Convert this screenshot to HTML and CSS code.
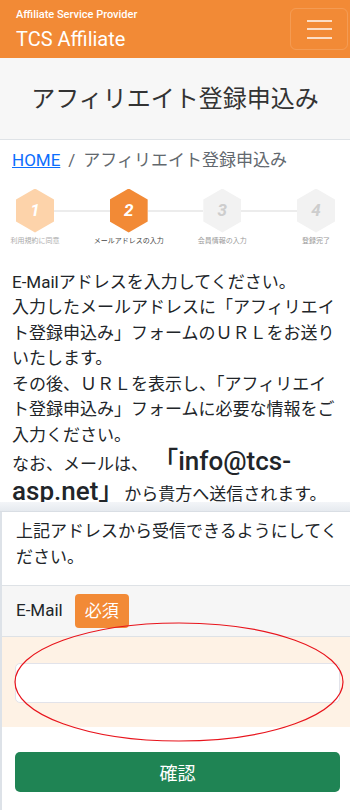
FILE: index.html
```html
<!DOCTYPE html>
<html lang="ja">
<head>
<meta charset="utf-8">
<title>アフィリエイト登録申込み</title>
<link rel="stylesheet" href="styles.css">
</head>
<body>
<div class="page">
  <header class="navbar">
    <div class="brand">
      <div class="brand-sub">Affiliate Service Provider</div>
      <div class="brand-name">TCS Affiliate</div>
    </div>
    <button class="toggler" type="button" aria-label="menu"><span class="bars"><i></i><i></i><i></i></span></button>
  </header>

  <section class="page-title"><h1>アフィリエイト登録申込み</h1></section>

  <main class="upper">
    <nav class="crumbs"><a href="#">HOME</a><span class="sep">/</span><span class="current">アフィリエイト登録申込み</span></nav>

    <ol class="steps">
      <li class="step done"><span class="hex">1</span><span class="label">利用規約に同意</span></li>
      <li class="link"></li>
      <li class="step active"><span class="hex">2</span><span class="label">メールアドレスの入力</span></li>
      <li class="link"></li>
      <li class="step todo"><span class="hex">3</span><span class="label">会員情報の入力</span></li>
      <li class="link"></li>
      <li class="step todo"><span class="hex">4</span><span class="label">登録完了</span></li>
    </ol>

    <p class="intro">E-Mailアドレスを入力してください。<br>入力したメールアドレスに「アフィリエイト登録申込み」フォームのＵＲＬをお送りいたします。<br>その後、ＵＲＬを表示し、「アフィリエイト登録申込み」フォームに必要な情報をご入力ください。<br>なお、メールは、 <span class="mail">「info@tcs-asp.net」</span>から貴方へ送信されます。</p>
  </main>

  <div class="seam"></div>

  <section class="lower">
    <p class="note">上記アドレスから受信できるようにしてください。</p>
    <div class="field-label">E-Mail<span class="badge">必須</span></div>
    <div class="field-body"><input class="input" type="email"></div>
    <div class="actions"><button class="btn" type="button">確認</button></div>
  </section>

  <svg class="annot" width="350" height="810" viewBox="0 0 350 810"><ellipse cx="179" cy="682" rx="164" ry="59" fill="none" stroke="#e8141c" stroke-width="1.2"/></svg>
</div>
</body>
</html>
```
FILE: styles.css
```css
* { box-sizing: border-box; }
html, body { margin: 0; padding: 0; }
body {
  width: 350px;
  font-family: Roboto, "Noto Sans CJK JP", sans-serif;
  font-size: 17px;
  line-height: 1.5;
  color: #212529;
  background: #fff;
}
.page { position: relative; overflow: hidden; }

.navbar {
  display: flex;
  justify-content: space-between;
  align-items: center;
  height: 58px;
  padding: 0 2px 0 16px;
  background: #f28a36;
  color: #fff;
}
.brand { display: flex; flex-direction: column; }
.brand-sub { font-size: 11px; line-height: 14px; font-weight: 500; }
.brand-name { font-size: 20px; line-height: 24px; margin-top: 5px; }
.toggler {
  width: 58px;
  height: 42px;
  border: 1px solid rgba(255,255,255,.15);
  border-radius: 6px;
  background: transparent;
  display: flex;
  align-items: center;
  justify-content: center;
  padding: 0;
}
.bars { display: flex; flex-direction: column; gap: 6.5px; width: 25px; }
.bars i { display: block; height: 2px; background: rgba(255,255,255,.72); }

.page-title {
  background: #f7f7f7;
  border-bottom: 1px solid #dfe3e7;
  padding: 23px 0 22px;
  text-align: center;
}
.page-title h1 { margin: 0; font-size: 24px; line-height: 36px; font-weight: 400; color: #333; }

.upper { height: 362px; overflow: hidden; padding: 8px 12px 0; }

.crumbs { display: flex; line-height: 25.5px; color: #62686e; }
.crumbs a { color: #0d6efd; text-decoration: underline; }
.crumbs .sep { padding: 0 8px; color: #62686e; }

.steps { list-style: none; margin: 15px 3px 0 4px; padding: 0; display: flex; align-items: flex-start; }
.step { width: 38px; flex: none; display: flex; flex-direction: column; align-items: center; }
.hex {
  width: 38px;
  height: 44px;
  clip-path: polygon(50% 0, 100% 25%, 100% 75%, 50% 100%, 0 75%, 0 25%);
  display: flex;
  align-items: center;
  justify-content: center;
  font-style: italic;
  font-weight: 700;
  font-size: 17px;
  line-height: 1;
  color: #fff;
}
.link { flex: 1; height: 2px; background: #ececec; margin-top: 21px; }
.label { margin-top: 3px; font-size: 7px; line-height: 10px; white-space: nowrap; color: #999; }
.done .hex { background: #fdd3aa; }
.done .label { color: #aaa; }
.active .hex { background: #f28a36; }
.active .label { color: #444; }
.todo .hex { background: #f2f2f2; color: #cdcdcd; }
.todo .label { color: #999; }

.intro { margin: 24px 0 0; }
.mail { font-size: 26px; font-weight: 500; line-height: 1; }

.seam {
  height: 10px;
  background: linear-gradient(#f3f5f8, #e6eaef);
  border-bottom: 1px solid #d9dee4;
}

.lower { border-left: 2px solid #dde2e8; padding-bottom: 30px; }
.note { margin: 0; padding: 7px 10px 15px 14px; }
.field-label {
  display: flex;
  align-items: center;
  background: #f6f6f6;
  border-top: 1px solid #dee2e6;
  border-bottom: 1px solid #dee2e6;
  padding: 8px 0 8px 14px;
}
.badge {
  margin-left: 12px;
  padding: 4px 10px;
  line-height: 26px;
  background: #f28a36;
  color: #fff;
  border-radius: 4px;
}
.field-body { background: #fef2e5; padding: 26px 10px 24px 13px; }
.input {
  display: block;
  width: 100%;
  height: 40px;
  border: 1px solid #e2e3ea;
  border-radius: 5px;
  background: #fff;
  font: inherit;
}
.actions { padding: 25px 10px 0 13px; }
.btn {
  display: block;
  width: 100%;
  height: 40px;
  border: none;
  border-radius: 5px;
  background: #1f8454;
  color: #fff;
  font-family: inherit;
  font-size: 18px;
}

.annot { position: absolute; top: 0; left: 0; pointer-events: none; }
```
